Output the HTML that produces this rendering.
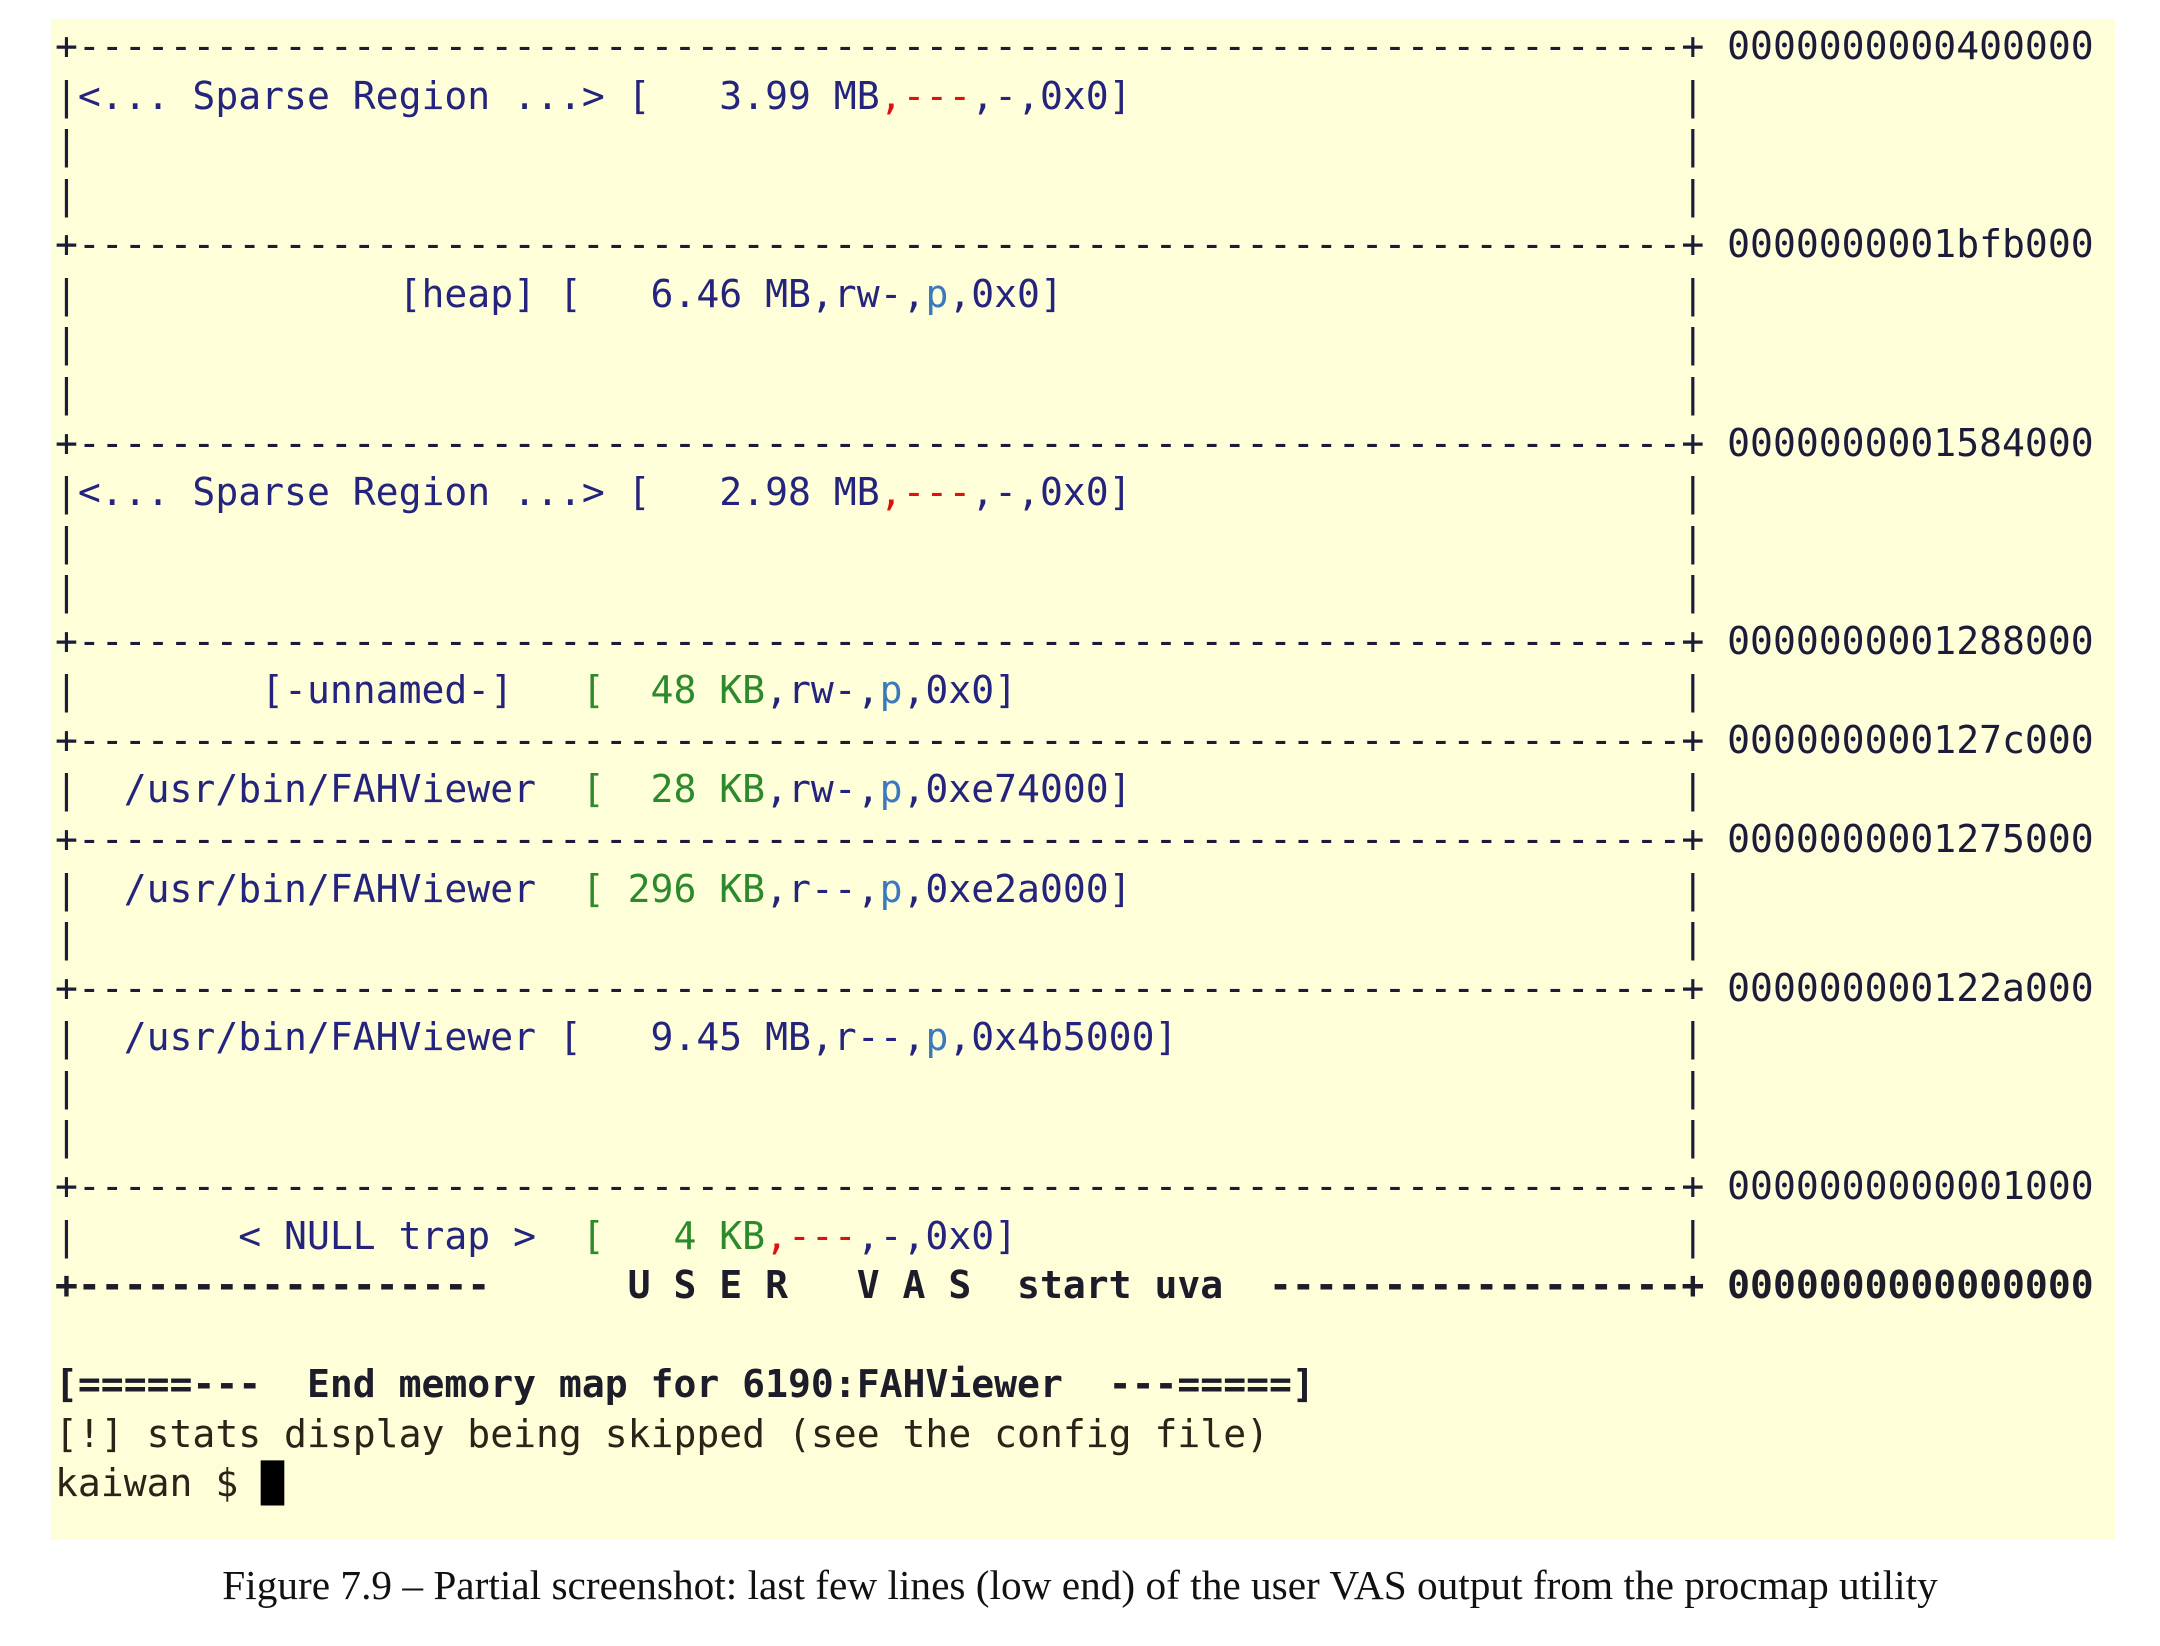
<!DOCTYPE html>
<html><head><meta charset="utf-8"><style>
body{margin:0;width:2160px;height:1646px;background:#fff;position:relative;overflow:hidden}
.bg{position:absolute;left:51px;top:19px;width:2064px;height:1521px;background:#fefed8}
pre{position:absolute;left:55px;top:22px;margin:0;font-family:"DejaVu Sans Mono","Liberation Mono",monospace;font-size:38.05px;line-height:49.57px;color:#1c1c3a;white-space:pre}
.n{color:#24247e}.r{color:#e01010}.g{color:#2c8a2c}.b{color:#3a78c0}.k{color:#1c1c2a;font-weight:bold}.d{color:#2a2418}
.cap{position:absolute;left:0;width:2160px;top:1561px;text-align:center;font-family:"Liberation Serif",serif;font-size:41.3px;color:#111}
</style></head><body>
<div class="bg"></div>
<pre>+----------------------------------------------------------------------+ 0000000000400000
|<span class="n">&lt;... Sparse Region ...&gt; [   3.99 MB</span><span class="r">,---</span><span class="n">,-,0x0]</span>                        |
|                                                                      |
|                                                                      |
+----------------------------------------------------------------------+ 0000000001bfb000
|              <span class="n">[heap] [   6.46 MB,rw-,</span><span class="b">p</span><span class="n">,0x0]</span>                           |
|                                                                      |
|                                                                      |
+----------------------------------------------------------------------+ 0000000001584000
|<span class="n">&lt;... Sparse Region ...&gt; [   2.98 MB</span><span class="r">,---</span><span class="n">,-,0x0]</span>                        |
|                                                                      |
|                                                                      |
+----------------------------------------------------------------------+ 0000000001288000
|        <span class="n">[-unnamed-]</span>   <span class="g">[  48 KB</span><span class="n">,rw-,</span><span class="b">p</span><span class="n">,0x0]</span>                             |
+----------------------------------------------------------------------+ 000000000127c000
|  <span class="n">/usr/bin/FAHViewer</span>  <span class="g">[  28 KB</span><span class="n">,rw-,</span><span class="b">p</span><span class="n">,0xe74000]</span>                        |
+----------------------------------------------------------------------+ 0000000001275000
|  <span class="n">/usr/bin/FAHViewer</span>  <span class="g">[ 296 KB</span><span class="n">,r--,</span><span class="b">p</span><span class="n">,0xe2a000]</span>                        |
|                                                                      |
+----------------------------------------------------------------------+ 000000000122a000
|  <span class="n">/usr/bin/FAHViewer [   9.45 MB,r--,</span><span class="b">p</span><span class="n">,0x4b5000]</span>                      |
|                                                                      |
|                                                                      |
+----------------------------------------------------------------------+ 0000000000001000
|       <span class="n">&lt; NULL trap &gt;</span>  <span class="g">[   4 KB</span><span class="r">,---</span><span class="n">,-,0x0]</span>                             |
<span class="k">+------------------      U S E R   V A S  start uva  ------------------+ 0000000000000000</span>

<span class="k">[=====---  End memory map for 6190:FAHViewer  ---=====]</span>
<span class="d">[!] stats display being skipped (see the config file)</span>
<span class="d">kaiwan $ </span><span style="background:#000;color:#000">█</span></pre>
<div class="cap">Figure 7.9 – Partial screenshot: last few lines (low end) of the user VAS output from the procmap utility</div>
</body></html>
